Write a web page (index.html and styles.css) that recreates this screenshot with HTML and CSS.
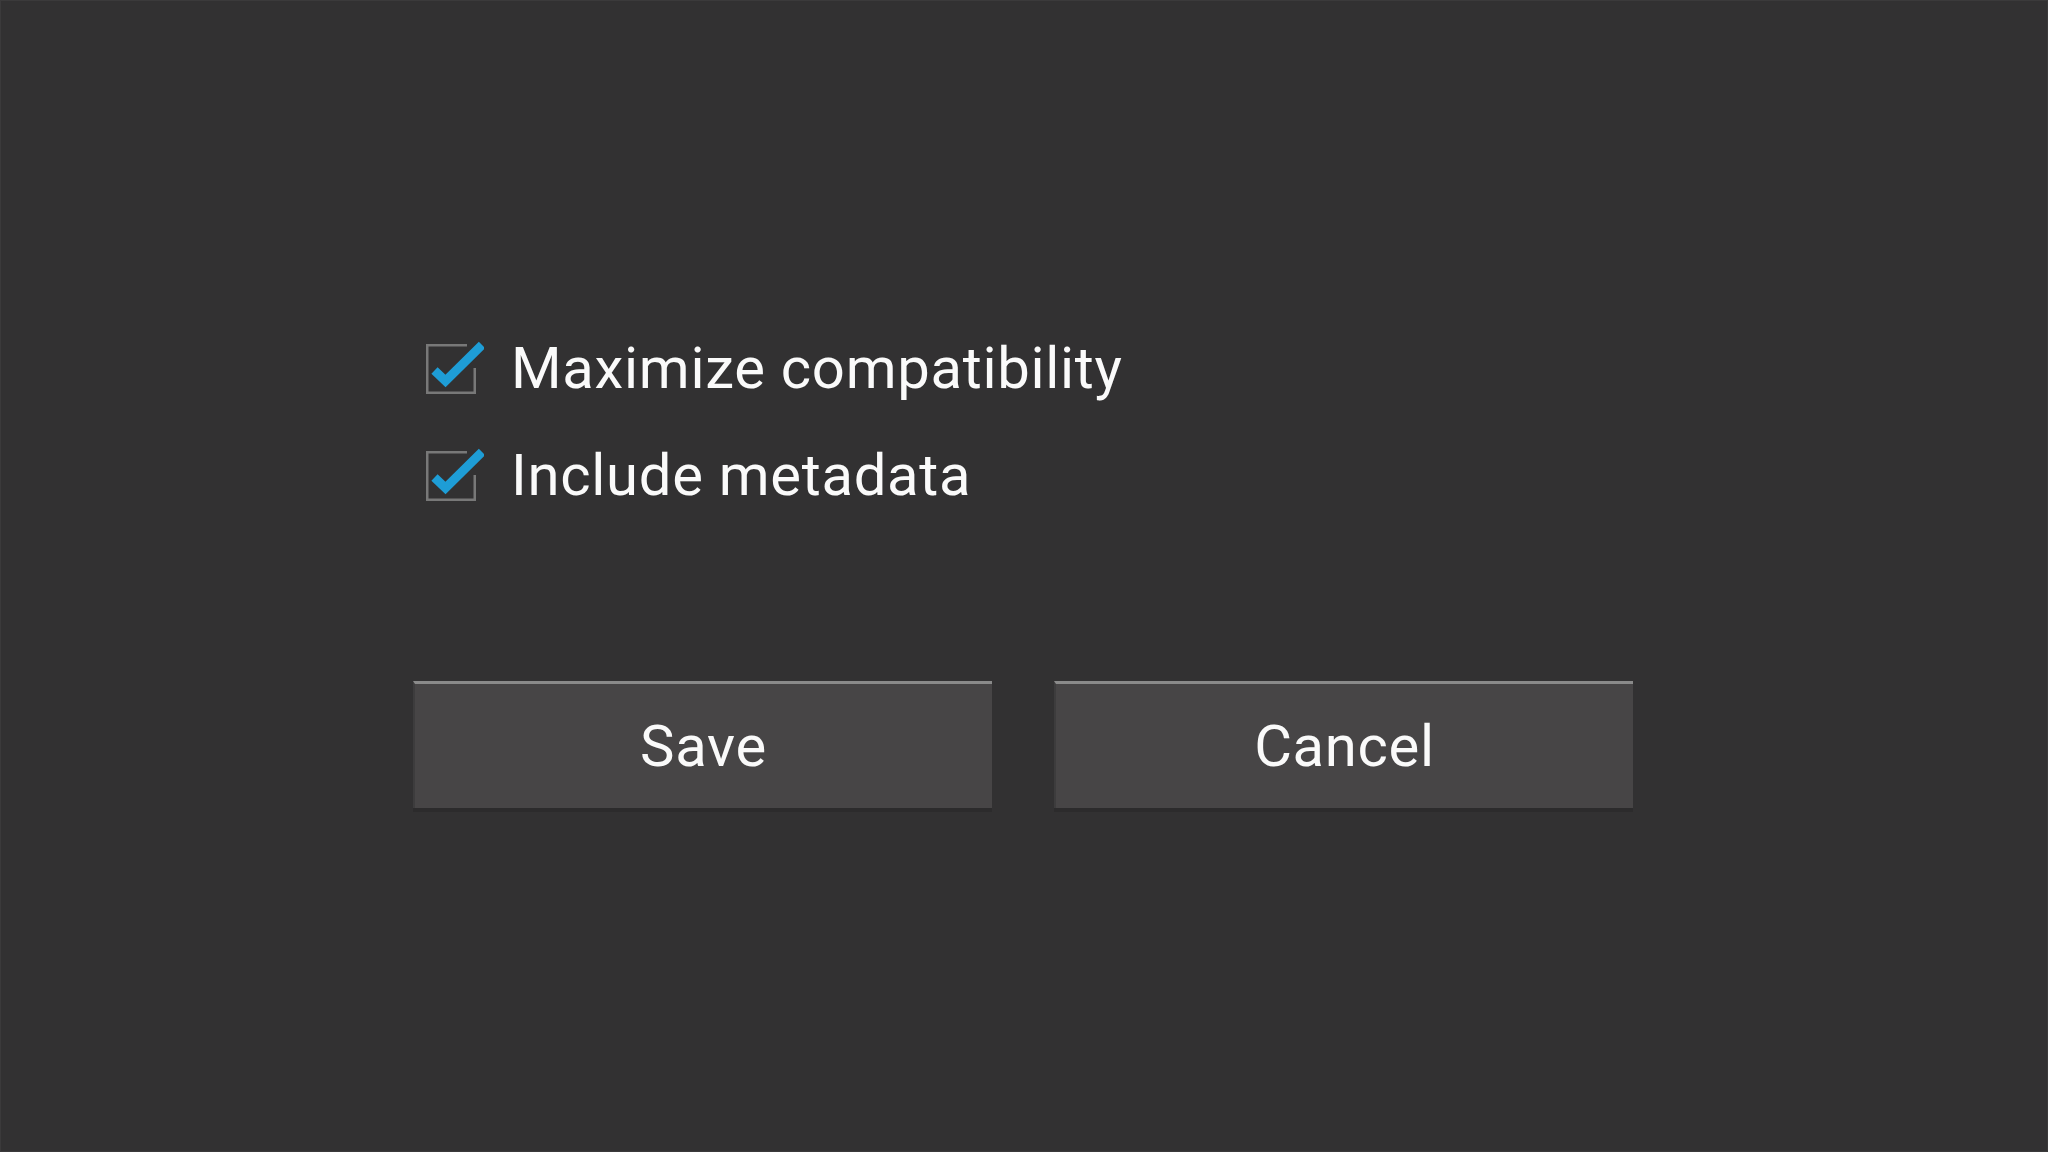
FILE: index.html
```html
<!DOCTYPE html>
<html>
<head>
<meta charset="utf-8">
<link rel="stylesheet" href="styles.css">
</head>
<body>
<div class="screen">
  <div class="dialog">
    <div class="options">
      <label class="option">
        <svg class="check" width="64" height="64" viewBox="0 0 64 64">
          <path class="box" d="M47 9.25 H7.25 V56.75 H54.75 V32"/>
          <path class="tick" d="M14.5 34.5 L25.5 45 L62 9"/>
        </svg>
        <span class="label">Maximize compatibility</span>
      </label>
      <label class="option">
        <svg class="check" width="64" height="64" viewBox="0 0 64 64">
          <path class="box" d="M47 9.25 H7.25 V56.75 H54.75 V32"/>
          <path class="tick" d="M14.5 34.5 L25.5 45 L62 9"/>
        </svg>
        <span class="label">Include metadata</span>
      </label>
    </div>
    <div class="buttons">
      <button class="btn">Save</button>
      <button class="btn">Cancel</button>
    </div>
  </div>
</div>
</body>
</html>
```
FILE: styles.css
```css
html, body {
  margin: 0;
  padding: 0;
  background: #323132;
}
.screen {
  box-sizing: border-box;
  width: 2048px;
  height: 1152px;
  border: 1px solid #3b3a3b;
  background: #323132;
  font-family: Roboto, "Noto Sans", sans-serif;
  color: #fafafa;
}
.dialog {
  padding: 335px 0 0 412px;
  display: flex;
  flex-direction: column;
}
.options {
  display: flex;
  flex-direction: column;
  gap: 43px;
  padding-left: 7px;
}
.option {
  display: flex;
  align-items: center;
  height: 64px;
  gap: 27px;
}
.check {
  display: block;
  flex: none;
}
.check .box {
  fill: none;
  stroke: #787878;
  stroke-width: 2.5;
}
.check .tick {
  fill: none;
  stroke: #1e9dd6;
  stroke-width: 9;
  stroke-linejoin: miter;
}
.label {
  font-size: 58px;
  line-height: 64px;
  letter-spacing: 0.7px;
}
.buttons {
  display: flex;
  gap: 62px;
  margin-top: 174px;
}
.btn {
  box-sizing: border-box;
  width: 579px;
  height: 127px;
  margin: 0;
  padding: 0;
  border: none;
  border-top: 3px solid #8a8a8a;
  border-left: 2px solid #3d3c3d;
  background: #474546;
  box-shadow: 0 4px 0 #2c2b2c;
  color: #fafafa;
  font-family: Roboto, "Noto Sans", sans-serif;
  font-size: 58px;
  letter-spacing: 0.7px;
  line-height: 1;
}
```
